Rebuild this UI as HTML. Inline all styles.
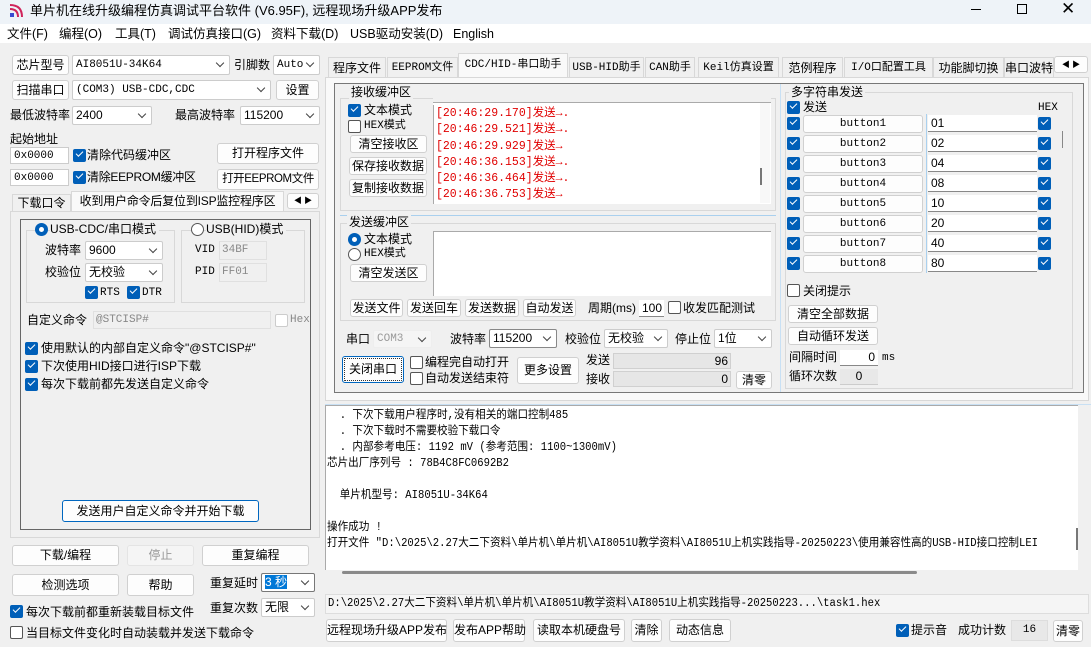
<!DOCTYPE html>
<html><head><meta charset="utf-8"><style>
*{box-sizing:border-box;margin:0;padding:0}
body{width:1091px;height:647px;background:#f0f0f0;font:12px "Liberation Sans","Noto Sans CJK SC",sans-serif;color:#000;position:relative;overflow:hidden}
div,span{position:absolute;white-space:nowrap}
.t{line-height:16px}
.b{background:#fdfdfd;border:1px solid #d0d0d0;border-radius:3px;text-align:center;line-height:16px}
.cb{width:13px;height:13px;background:#005fb8;border-radius:2px}
.cb::after{content:"";position:absolute;left:3px;top:2px;width:6px;height:3px;border-left:1.5px solid #fff;border-bottom:1.5px solid #fff;transform:rotate(-45deg)}
.ck{width:13px;height:13px;border:1px solid #555;border-radius:2px;background:#fff}
.rd{width:13px;height:13px;border-radius:50%;border:1px solid #555;background:#fff}
.rs{width:13px;height:13px;border-radius:50%;background:#005fb8}
.rs::after{content:"";position:absolute;left:4px;top:4px;width:5px;height:5px;border-radius:50%;background:#fff}
.in{background:#fff;border-bottom:1px solid #888;line-height:16px;padding-left:3px}
.sel{background:#fff;border:1px solid #ccc;border-radius:2px;line-height:16px;padding-left:3px}
.sel::after{content:"";position:absolute;right:6px;top:4px;width:5px;height:5px;border-right:1px solid #444;border-bottom:1px solid #444;transform:rotate(45deg)}
.m{font-family:"Liberation Mono","Noto Sans CJK SC",monospace;font-size:11px}
.gb{border:1px solid #d8d8d8}
.tab{border:1px solid #d8d8d8;border-bottom:none;background:#f0f0f0;text-align:center;line-height:20px}
.red{color:#e00000}
.c{font-size:12px}
</style></head><body>
<div style="left:0;top:0;width:1091px;height:24px;background:#eef3f8"></div>
<div style="left:9px;top:4px;width:14px;height:14px">
<svg width="14" height="14"><path d="M1 1 Q13 1 13 13" stroke="#d0245b" stroke-width="2" fill="none"/><path d="M1 5 Q9 5 9 13" stroke="#d0245b" stroke-width="2" fill="none"/><rect x="1" y="9" width="4" height="4" fill="#3a4bd0"/></svg></div>
<div class="t" style="left:30px;top:3px;font-size:13px">单片机在线升级编程仿真调试平台软件 (V6.95F), 远程现场升级APP发布</div>
<div style="left:971px;top:9px;width:10px;border-top:1px solid #000"></div>
<div style="left:1017px;top:4px;width:10px;height:10px;border:1px solid #000"></div>
<div class="t" style="left:1061px;top:1px;font-size:17px">✕</div>
<div style="left:0;top:24px;width:1091px;height:19px;background:#fff"></div>
<div class="t" style="left:7px;top:26px;font-size:12.5px">文件(F)</div>
<div class="t" style="left:59px;top:26px;font-size:12.5px">编程(O)</div>
<div class="t" style="left:115px;top:26px;font-size:12.5px">工具(T)</div>
<div class="t" style="left:168px;top:26px;font-size:12.5px">调试仿真接口(G)</div>
<div class="t" style="left:271px;top:26px;font-size:12.5px">资料下载(D)</div>
<div class="t" style="left:350px;top:26px;font-size:12.5px">USB驱动安装(D)</div>
<div class="t" style="left:453px;top:26px;font-size:12.5px">English</div>

<div class="b c" style="left:12px;top:55px;width:57px;height:20px;line-height:18px">芯片型号</div>
<div class="sel m" style="left:72px;top:55px;width:158px;height:20px;line-height:18px">AI8051U-34K64</div>
<div class="t c" style="left:234px;top:57px">引脚数</div>
<div class="sel m" style="left:273px;top:55px;width:47px;height:20px;line-height:18px">Auto</div>
<div class="b c" style="left:12px;top:80px;width:57px;height:20px;line-height:18px">扫描串口</div>
<div class="sel m" style="left:72px;top:80px;width:199px;height:20px;line-height:18px">(COM3) USB-CDC,CDC</div>
<div class="b c" style="left:276px;top:80px;width:43px;height:20px;line-height:18px">设置</div>
<div class="t c" style="left:10px;top:107px">最低波特率</div>
<div class="sel" style="left:72px;top:106px;width:80px;height:19px">2400</div>
<div class="t c" style="left:175px;top:107px">最高波特率</div>
<div class="sel" style="left:240px;top:106px;width:80px;height:19px">115200</div>
<div class="t c" style="left:10px;top:131px">起始地址</div>
<div class="in m" style="left:10px;top:147px;width:59px;height:17px;border:1px solid #ccc">0x0000</div>
<div class="cb" style="left:73px;top:149px"></div><div class="t c" style="left:87px;top:147px">清除代码缓冲区</div>
<div class="b c" style="left:217px;top:143px;width:102px;height:21px;line-height:19px">打开程序文件</div>
<div class="in m" style="left:10px;top:169px;width:59px;height:17px;border:1px solid #ccc">0x0000</div>
<div class="cb" style="left:73px;top:171px"></div><div class="t c" style="left:87px;top:169px;letter-spacing:-0.3px">清除EEPROM缓冲区</div>
<div class="b" style="left:217px;top:169px;width:102px;height:21px;line-height:19px;font-size:11.5px;letter-spacing:-0.4px">打开EEPROM文件</div>
<div class="tab c" style="left:12px;top:194px;width:59px;height:18px;line-height:16px">下载口令</div>
<div class="tab" style="left:71px;top:191px;width:213px;height:21px;background:#f9f9f9;font-size:12px;line-height:19px;letter-spacing:-0.2px">收到用户命令后复位到ISP监控程序区</div>
<div class="b" style="left:287px;top:193px;width:32px;height:16px;font-size:8px;line-height:14px">◀ ▶</div>
<div style="left:10px;top:211px;width:310px;height:327px;border:1px solid #d8d8d8"></div>
<div style="left:20px;top:219px;width:291px;height:311px;border:1px solid #666"></div>
<div class="gb" style="left:26px;top:230px;width:149px;height:73px"></div>
<div class="rs" style="left:35px;top:223px"></div><div class="t" style="left:50px;top:221px;background:#f0f0f0;font-size:12px;padding-right:3px">USB-CDC/串口模式</div>
<div class="t c" style="left:45px;top:242px">波特率</div>
<div class="sel" style="left:85px;top:241px;width:78px;height:19px">9600</div>
<div class="t c" style="left:45px;top:264px">校验位</div>
<div class="sel" style="left:85px;top:263px;width:78px;height:19px">无校验</div>
<div class="cb" style="left:85px;top:286px"></div><div class="t m" style="left:100px;top:285px">RTS</div>
<div class="cb" style="left:127px;top:286px"></div><div class="t m" style="left:142px;top:285px">DTR</div>
<div class="gb" style="left:181px;top:230px;width:124px;height:73px"></div>
<div class="rd" style="left:191px;top:223px"></div><div class="t" style="left:206px;top:221px;background:#f0f0f0;padding-right:3px">USB(HID)模式</div>
<div class="t m" style="left:195px;top:242px">VID</div>
<div class="m" style="left:219px;top:241px;width:48px;height:19px;border:1px solid #e0e0e0;color:#888;line-height:17px;padding-left:2px">34BF</div>
<div class="t m" style="left:195px;top:264px">PID</div>
<div class="m" style="left:219px;top:263px;width:48px;height:19px;border:1px solid #e0e0e0;color:#888;line-height:17px;padding-left:2px">FF01</div>
<div class="t c" style="left:27px;top:312px">自定义命令</div>
<div class="m" style="left:93px;top:311px;width:178px;height:18px;border:1px solid #e0e0e0;color:#888;line-height:16px;padding-left:2px">@STCISP#</div>
<div class="ck" style="left:275px;top:314px;border-color:#ccc"></div><div class="t m" style="left:290px;top:312px;color:#888">Hex</div>
<div class="cb" style="left:25px;top:342px"></div><div class="t c" style="left:41px;top:340px">使用默认的内部自定义命令"@STCISP#"</div>
<div class="cb" style="left:25px;top:360px"></div><div class="t c" style="left:41px;top:358px">下次使用HID接口进行ISP下载</div>
<div class="cb" style="left:25px;top:378px"></div><div class="t c" style="left:41px;top:376px">每次下载前都先发送自定义命令</div>
<div class="b c" style="left:62px;top:500px;width:197px;height:22px;border-color:#0067c0;line-height:20px">发送用户自定义命令并开始下载</div>
<div class="b c" style="left:12px;top:545px;width:107px;height:21px;line-height:19px">下载/编程</div>
<div class="b c" style="left:127px;top:545px;width:67px;height:21px;line-height:19px;color:#999;border-color:#e4e4e4;background:#f5f5f5">停止</div>
<div class="b c" style="left:202px;top:545px;width:107px;height:21px;line-height:19px">重复编程</div>
<div class="b c" style="left:12px;top:574px;width:107px;height:22px;line-height:20px">检测选项</div>
<div class="b c" style="left:127px;top:574px;width:67px;height:22px;line-height:20px">帮助</div>
<div class="t c" style="left:210px;top:575px">重复延时</div>
<div class="sel" style="left:261px;top:573px;width:54px;height:19px;border-color:#777"><span style="position:relative;background:#0078d7;color:#fff">3 秒</span></div>
<div class="t c" style="left:210px;top:600px">重复次数</div>
<div class="sel" style="left:261px;top:598px;width:54px;height:19px">无限</div>
<div class="cb" style="left:10px;top:605px"></div><div class="t c" style="left:26px;top:604px">每次下载前都重新装载目标文件</div>
<div class="ck" style="left:10px;top:626px"></div><div class="t c" style="left:26px;top:625px">当目标文件变化时自动装载并发送下载命令</div>

<div class="tab c" style="left:328px;top:57px;width:58px;height:20px">程序文件</div>
<div class="tab m" style="left:387px;top:57px;width:71px;height:20px">EEPROM文件</div>
<div class="tab m" style="left:458px;top:53px;width:110px;height:24px;background:#f9f9f9;line-height:22px">CDC/HID-串口助手</div>
<div class="tab m" style="left:569px;top:57px;width:75px;height:20px">USB-HID助手</div>
<div class="tab m" style="left:645px;top:57px;width:50px;height:20px">CAN助手</div>
<div class="tab m" style="left:698px;top:57px;width:81px;height:20px">Keil仿真设置</div>
<div class="tab c" style="left:782px;top:57px;width:61px;height:20px">范例程序</div>
<div class="tab m" style="left:844px;top:57px;width:89px;height:20px">I/O口配置工具</div>
<div class="tab c" style="left:933px;top:57px;width:71px;height:20px">功能脚切换</div>
<div class="tab c" style="left:1004px;top:57px;width:50px;height:20px;overflow:hidden">串口波特</div>
<div class="b" style="left:1054px;top:56px;width:34px;height:17px;font-size:8px;line-height:15px">◀ ▶</div>
<div style="left:325px;top:77px;width:764px;height:324px;border:1px solid #d8d8d8;background:#f9f9f9"></div>
<div style="left:334px;top:83px;width:750px;height:310px;border:1px solid #777;background:#f0f0f0"></div>
<div style="left:780px;top:84px;width:1px;height:308px;background:#c8e0f4"></div>
<div class="gb" style="left:340px;top:98px;width:436px;height:113px"></div>
<div class="t c" style="left:349px;top:84px;background:#f0f0f0;padding:0 2px">接收缓冲区</div>
<div class="cb" style="left:348px;top:104px"></div><div class="t c" style="left:364px;top:102px">文本模式</div>
<div class="ck" style="left:348px;top:120px"></div><div class="t m" style="left:364px;top:118px">HEX模式</div>
<div class="b c" style="left:350px;top:135px;width:77px;height:18px">清空接收区</div>
<div class="b c" style="left:349px;top:157px;width:78px;height:18px">保存接收数据</div>
<div class="b c" style="left:349px;top:179px;width:78px;height:18px">复制接收数据</div>
<div style="left:433px;top:102px;width:338px;height:102px;background:#fff;border:1px solid #aaa;border-width:1px 0 0 1px;overflow:hidden"></div>
<div class="red m" style="left:436px;top:90px;line-height:16.2px;font-size:11.5px">[20:46:29.    ]发送→.<br>[20:46:29.170]发送→.<br>[20:46:29.521]发送→.<br>[20:46:29.929]发送→<br>[20:46:36.153]发送→.<br>[20:46:36.464]发送→.<br>[20:46:36.753]发送→</div>
<div style="left:433px;top:90px;width:338px;height:12px;background:#f0f0f0"></div>
<div style="left:433px;top:102px;width:338px;height:3px;background:#fff;border-top:1px solid #aaa"></div>
<div class="t c" style="left:349px;top:84px;background:#f0f0f0;padding:0 2px">接收缓冲区</div>
<div style="left:760px;top:103px;width:10px;height:100px;background:#f8f8f8"></div>
<div style="left:760px;top:168px;width:2px;height:17px;background:#777"></div>
<div style="left:340px;top:215px;width:436px;height:1px;background:#aad0ee"></div>
<div class="gb" style="left:340px;top:223px;width:436px;height:98px"></div>
<div class="t c" style="left:347px;top:214px;background:#f0f0f0;padding:0 2px">发送缓冲区</div>
<div class="rs" style="left:348px;top:233px"></div><div class="t c" style="left:364px;top:231px">文本模式</div>
<div class="rd" style="left:348px;top:248px"></div><div class="t m" style="left:364px;top:246px">HEX模式</div>
<div class="b c" style="left:350px;top:264px;width:77px;height:18px">清空发送区</div>
<div style="left:433px;top:231px;width:338px;height:65px;background:#fff;border:1px solid #aaa;border-width:1px 0 0 1px"></div>
<div class="b c" style="left:350px;top:299px;width:53px;height:18px">发送文件</div>
<div class="b c" style="left:407px;top:299px;width:54px;height:18px">发送回车</div>
<div class="b c" style="left:465px;top:299px;width:54px;height:18px">发送数据</div>
<div class="b c" style="left:523px;top:299px;width:53px;height:18px">自动发送</div>
<div class="t c" style="left:588px;top:300px">周期(ms)</div>
<div class="in" style="left:639px;top:300px;width:25px;height:17px;text-align:right;padding-right:2px">100</div>
<div class="ck" style="left:668px;top:301px"></div><div class="t c" style="left:683px;top:300px">收发匹配测试</div>
<div class="t c" style="left:346px;top:331px">串口</div>
<div class="sel m" style="left:373px;top:330px;width:59px;height:18px;color:#999;background:#f5f5f5;border-color:#eee">COM3</div>
<div class="t c" style="left:450px;top:331px">波特率</div>
<div class="sel" style="left:489px;top:329px;width:68px;height:19px;border-color:#888">115200</div>
<div class="t c" style="left:565px;top:331px">校验位</div>
<div class="sel" style="left:604px;top:329px;width:64px;height:19px">无校验</div>
<div class="t c" style="left:675px;top:331px">停止位</div>
<div class="sel" style="left:714px;top:329px;width:58px;height:19px">1位</div>
<div class="b c" style="left:342px;top:356px;width:62px;height:27px;border:1px solid #0067c0;line-height:25px;outline:1px dotted #333;outline-offset:-3px">关闭串口</div>
<div class="ck" style="left:410px;top:356px"></div><div class="t c" style="left:425px;top:354px">编程完自动打开</div>
<div class="ck" style="left:410px;top:372px"></div><div class="t c" style="left:425px;top:370px">自动发送结束符</div>
<div class="b c" style="left:517px;top:357px;width:62px;height:27px;line-height:25px">更多设置</div>
<div class="t c" style="left:586px;top:352px">发送</div>
<div style="left:613px;top:353px;width:118px;height:16px;background:#e6e6e6;border:1px solid #d0d0d0;text-align:right;padding-right:2px;line-height:14px">96</div>
<div class="t c" style="left:586px;top:371px">接收</div>
<div style="left:613px;top:371px;width:118px;height:16px;background:#e6e6e6;border:1px solid #d0d0d0;text-align:right;padding-right:2px;line-height:14px">0</div>
<div class="b c" style="left:736px;top:371px;width:36px;height:18px">清零</div>
<div class="gb" style="left:785px;top:92px;width:288px;height:297px"></div>
<div class="t c" style="left:789px;top:84px;background:#f0f0f0;padding:0 2px">多字符串发送</div>
<div class="cb" style="left:787px;top:101px"></div><div class="t c" style="left:803px;top:99px">发送</div>
<div class="t m" style="left:1038px;top:100px">HEX</div>
<div style="left:926px;top:114px;width:1px;height:159px;background:#aad0ee"></div>
<div style="left:1062px;top:131px;width:1px;height:17px;background:#888"></div>

<div class="cb" style="left:787px;top:117px"></div><div class="b m" style="left:803px;top:115px;width:120px;height:18px">button1</div><div class="in" style="left:928px;top:115px;width:109px;height:17px">01</div><div class="cb" style="left:1038px;top:117px"></div>
<div class="cb" style="left:787px;top:137px"></div><div class="b m" style="left:803px;top:135px;width:120px;height:18px">button2</div><div class="in" style="left:928px;top:135px;width:109px;height:17px">02</div><div class="cb" style="left:1038px;top:137px"></div>
<div class="cb" style="left:787px;top:157px"></div><div class="b m" style="left:803px;top:155px;width:120px;height:18px">button3</div><div class="in" style="left:928px;top:155px;width:109px;height:17px">04</div><div class="cb" style="left:1038px;top:157px"></div>
<div class="cb" style="left:787px;top:177px"></div><div class="b m" style="left:803px;top:175px;width:120px;height:18px">button4</div><div class="in" style="left:928px;top:175px;width:109px;height:17px">08</div><div class="cb" style="left:1038px;top:177px"></div>
<div class="cb" style="left:787px;top:197px"></div><div class="b m" style="left:803px;top:195px;width:120px;height:18px">button5</div><div class="in" style="left:928px;top:195px;width:109px;height:17px">10</div><div class="cb" style="left:1038px;top:197px"></div>
<div class="cb" style="left:787px;top:217px"></div><div class="b m" style="left:803px;top:215px;width:120px;height:18px">button6</div><div class="in" style="left:928px;top:215px;width:109px;height:17px">20</div><div class="cb" style="left:1038px;top:217px"></div>
<div class="cb" style="left:787px;top:237px"></div><div class="b m" style="left:803px;top:235px;width:120px;height:18px">button7</div><div class="in" style="left:928px;top:235px;width:109px;height:17px">40</div><div class="cb" style="left:1038px;top:237px"></div>
<div class="cb" style="left:787px;top:257px"></div><div class="b m" style="left:803px;top:255px;width:120px;height:18px">button8</div><div class="in" style="left:928px;top:255px;width:109px;height:17px">80</div><div class="cb" style="left:1038px;top:257px"></div>
<div class="ck" style="left:787px;top:284px"></div><div class="t c" style="left:803px;top:283px">关闭提示</div>
<div class="b c" style="left:788px;top:305px;width:90px;height:18px">清空全部数据</div>
<div class="b c" style="left:788px;top:327px;width:90px;height:18px">自动循环发送</div>
<div class="t c" style="left:789px;top:349px">间隔时间</div>
<div class="in" style="left:840px;top:350px;width:38px;height:16px;text-align:right;padding-right:3px;line-height:15px">0</div>
<div class="t m" style="left:882px;top:350px">ms</div>
<div class="t c" style="left:789px;top:368px">循环次数</div>
<div style="left:840px;top:369px;width:38px;height:16px;border:1px solid #ccc;border-width:0 0 1px;background:#e8e8e8;text-align:center;line-height:15px">0</div>
<div style="left:325px;top:405px;width:753px;height:167px;background:#fff;border:1px solid #aaa;border-width:1px 0 0 1px"></div>
<div style="left:325px;top:404px;width:766px;height:1px;background:#c8e0f4"></div>
<div style="left:325px;top:570px;width:766px;height:14px;background:#f0f0f0"></div>
<div style="left:342px;top:571px;width:575px;height:3px;background:#8a8a8a;border-radius:2px"></div>
<div style="left:1076px;top:528px;width:2px;height:22px;background:#777"></div>
<div class="m" style="left:327px;top:408px;line-height:16px;font-size:11.5px;transform:scaleX(.92);transform-origin:left">&nbsp;&nbsp;. 下次下载用户程序时,没有相关的端口控制485<br>&nbsp;&nbsp;. 下次下载时不需要校验下载口令<br>&nbsp;&nbsp;. 内部参考电压: 1192 mV (参考范围: 1100~1300mV)<br>芯片出厂序列号 : 78B4C8FC0692B2<br><br>&nbsp;&nbsp;单片机型号: AI8051U-34K64<br><br>操作成功 !<br>打开文件 "D:\2025\2.27大二下资料\单片机\单片机\AI8051U教学资料\AI8051U上机实践指导-20250223\使用兼容性高的USB-HID接口控制LEI</div>
<div style="left:325px;top:594px;width:764px;height:20px;background:#f5f5f5;border:1px solid #ddd"></div>
<div class="m" style="left:328px;top:596px;line-height:16px;font-size:11.5px;transform:scaleX(.92);transform-origin:left">D:\2025\2.27大二下资料\单片机\单片机\AI8051U教学资料\AI8051U上机实践指导-20250223...\task1.hex</div>
<div class="b" style="left:326px;top:619px;width:121px;height:23px;line-height:21px;font-size:12px">远程现场升级APP发布</div>
<div class="b" style="left:453px;top:619px;width:72px;height:23px;line-height:21px">发布APP帮助</div>
<div class="b" style="left:533px;top:619px;width:92px;height:23px;line-height:21px">读取本机硬盘号</div>
<div class="b" style="left:631px;top:619px;width:31px;height:23px;line-height:21px">清除</div>
<div class="b" style="left:669px;top:619px;width:62px;height:23px;line-height:21px">动态信息</div>
<div class="cb" style="left:896px;top:624px"></div><div class="t c" style="left:911px;top:622px">提示音</div>
<div class="t c" style="left:958px;top:622px">成功计数</div>
<div style="left:1011px;top:620px;width:37px;height:21px;background:#e8e8e8;border:1px solid #ddd;text-align:center;line-height:19px" class="m">16</div>
<div class="b c" style="left:1053px;top:620px;width:30px;height:22px;line-height:20px">清零</div>
</body></html>
